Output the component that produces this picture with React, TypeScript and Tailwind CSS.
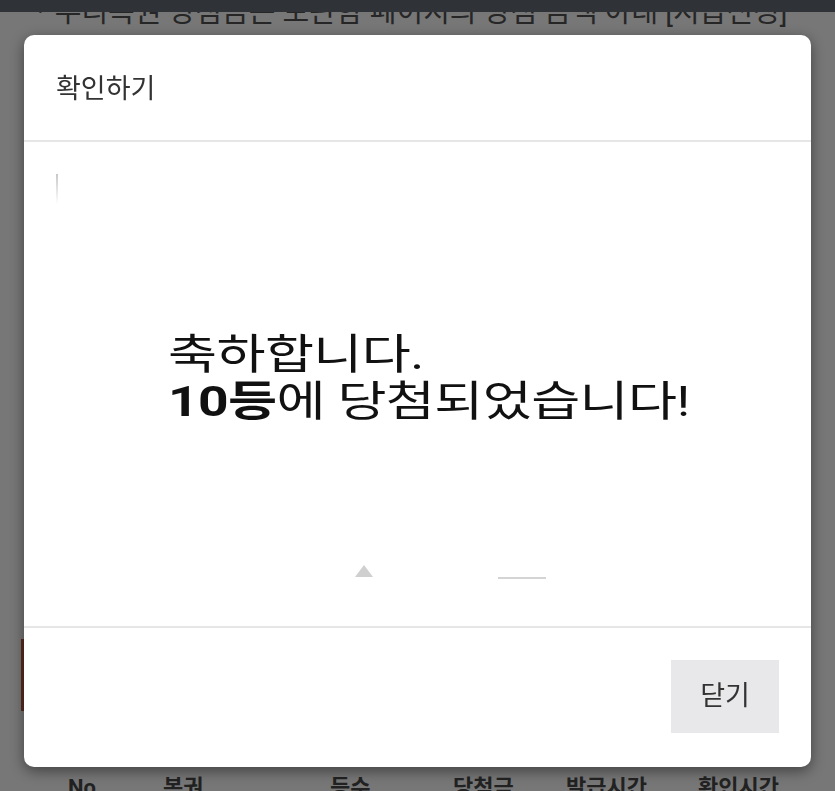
import React from "react";

const font = { fontFamily: "Roboto, 'Noto Sans CJK KR', sans-serif" };

const BackgroundPage = () => {
  return (
    <div className="relative h-[791px] w-[835px] overflow-hidden bg-[#777777]" style={font}>
      {/* fixed top bar */}
      <div className="absolute left-0 right-0 top-0 z-10 h-[12px] bg-[#2f3337]" />

      {/* notice line (under the bar) */}
      <div className="-mt-[6px] flex items-center gap-[12px] pl-[38px] text-[29px] leading-[36px] text-[#262626]">
        <span className="text-[14px]">•</span>
        <span>우리복권 당첨금은 보관함 페이지의 당첨 금액 아래 [지급신청]</span>
      </div>

      {/* body content hidden behind the dialog */}
      <div className="h-[747px] pl-[21px] pt-[609px]">
        <div className="h-[72px] w-[400px] bg-[#5b2a1f]" />
      </div>

      {/* table header */}
      <div className="flex items-start text-[22px] font-bold leading-none text-[#222]">
        <span className="ml-[68px] w-[95px]">No</span>
        <span className="w-[167px]">복권</span>
        <span className="w-[123px]">등수</span>
        <span className="w-[113px]">당첨금</span>
        <span className="w-[132px]">발급시간</span>
        <span>확인시간</span>
      </div>
    </div>
  );
};

const Dialog = () => {
  return (
    <div className="fixed inset-0 z-20" style={font}>
      <div className="absolute left-[24px] top-[35px] flex h-[732px] w-[787px] flex-col overflow-hidden rounded-[10px] bg-white shadow-[0_4px_14px_rgba(0,0,0,0.45)]">
        {/* header */}
        <div className="flex h-[107px] items-center border-b-2 border-[#e6e6e6] pl-[32px] pt-[3px]">
          <h2 className="text-[27px] font-normal text-[#333]">확인하기</h2>
        </div>

        {/* body: image-like message */}
        <div className="relative flex h-[486px] flex-col border-b-2 border-[#e6e6e6] pl-[144px] pt-[189px]">
          <div className="absolute left-[32px] top-[32px] h-[30px] w-[2px] bg-gradient-to-b from-[#c8c8c8] to-white" />
          <div className="absolute left-[331px] top-[423px] h-0 w-0 border-b-[12px] border-l-[9px] border-r-[9px] border-b-[#cfcfcf] border-l-transparent border-r-transparent" />
          <div className="absolute left-[474px] top-[435px] h-[2px] w-[48px] bg-[#d4d4d4]" />
          <p className="origin-left scale-x-[1.27] text-[42px] leading-[47px] text-[#111] tracking-[-0.5px]">
            축하합니다.
            <br />
            <span className="font-bold">10등</span>에 당첨되었습니다!
          </p>
        </div>

        {/* footer */}
        <div className="flex flex-1 items-center justify-end pr-[32px] pb-[3px]">
          <button className="flex h-[73px] w-[108px] items-center justify-center bg-[#e8e8ea] text-[27px] text-[#333]">
            닫기
          </button>
        </div>
      </div>
    </div>
  );
};

export default function App() {
  return (
    <div>
      <BackgroundPage />
      <Dialog />
    </div>
  );
}
